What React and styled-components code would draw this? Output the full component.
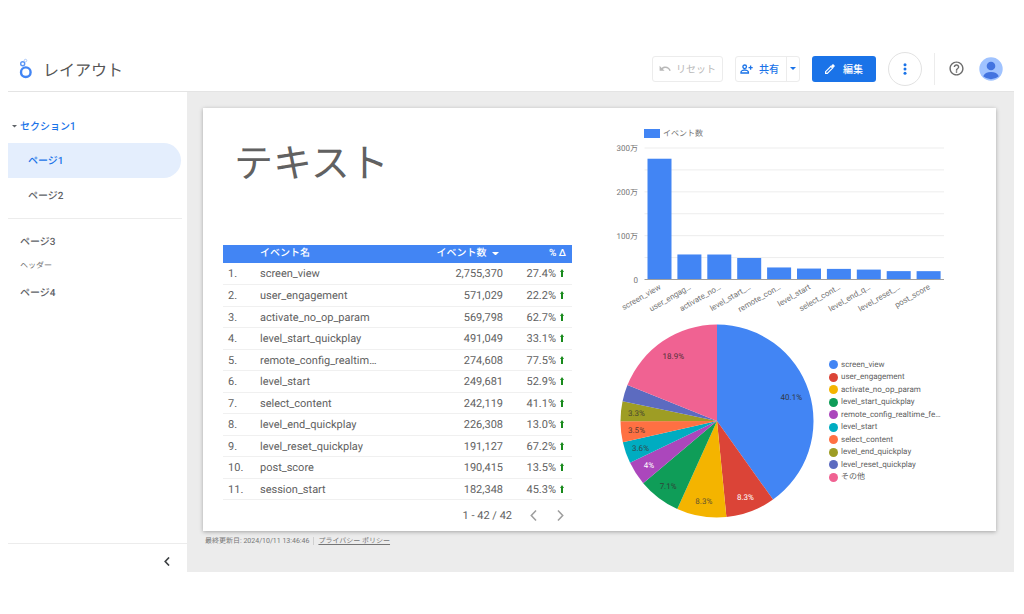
import React, { useState } from 'react';
import styled, { createGlobalStyle } from 'styled-components';

const GlobalStyle = createGlobalStyle`
    * {
        box-sizing: border-box;
    }

    body {
        margin: 0;
        background: #fff;
        color: #616161;
        font-family: Roboto, 'Noto Sans CJK JP', sans-serif;
        font-size: 10px;
        text-rendering: geometricPrecision;
    }

    button {
        font: inherit;
        color: inherit;
        padding: 0;
        border: 0;
        background: none;
        cursor: pointer;
    }

    svg {
        display: block;
        flex-shrink: 0;
    }
`;

const Page = styled.div`
    min-height: 100vh;
    display: flex;
    flex-direction: column;
    padding: 46px 10px 42px 8px;
`;

const Header = styled.header`
    display: flex;
    align-items: center;
    height: 46px;
    padding: 0 11px;
    border-bottom: 1px solid #e4e4e4;
`;

const Title = styled.h1`
    flex: 1;
    margin: 0 0 0 11px;
    padding-top: 5px;
    font-size: 16px;
    font-weight: 400;
    line-height: 20px;
    color: #555;
`;

const Actions = styled.div`
    display: flex;
    align-items: center;
    gap: 12px;
`;

const ActionButton = styled.button`
    display: flex;
    align-items: center;
    gap: ${(props) => props.$gap || 5}px;
    height: 26px;
    padding: 0 ${(props) => props.$pad || 6}px;
    border: ${(props) => (props.$primary ? '0' : '1px solid #ececec')};
    border-radius: 3px;
    background: ${(props) => (props.$primary ? '#1a73e8' : '#fff')};
    color: ${(props) => (props.$primary ? '#fff' : '#1a73e8')};
    font-weight: 500;

    &:disabled {
        color: #b8b8b8;
        font-weight: 400;
        cursor: default;
    }
`;

const SplitButton = styled.div`
    display: flex;
    height: 26px;
    border: 1px solid #ececec;
    border-radius: 3px;
    color: #1a73e8;
    font-weight: 500;
`;

const SplitMain = styled.button`
    display: flex;
    align-items: center;
    gap: 6px;
    padding: 0 7px 0 4px;
`;

const SplitToggle = styled.button`
    display: flex;
    align-items: center;
    justify-content: center;
    width: 13px;
    border-left: 1px solid #ececec;
`;

const MoreButton = styled.button`
    display: flex;
    align-items: center;
    justify-content: center;
    width: 34px;
    height: 34px;
    border: 1px solid #e2e2e2;
    border-radius: 50%;
    color: #1a73e8;
`;

const Account = styled.div`
    display: flex;
    align-items: center;
    gap: 14px;
    height: 32px;
    padding-left: 13px;
    border-left: 1px solid #ececec;
`;

const Body = styled.div`
    flex: 1;
    display: flex;
`;

const Sidebar = styled.aside`
    display: flex;
    flex-direction: column;
    width: 179px;
    flex-shrink: 0;
`;

const Nav = styled.nav`
    flex: 1;
    padding: 16px 5px 0 0;
`;

const SectionToggle = styled.button`
    display: flex;
    align-items: center;
    gap: 3px;
    width: 100%;
    height: 35px;
    padding-left: 4px;
    color: #1a73e8;
    font-weight: 500;

    svg {
        margin-top: 2px;
        color: #5f6368;
    }
`;

const NavGroup = styled.div`
    padding-top: ${(props) => (props.$divided ? '9px' : '0')};
    margin-top: ${(props) => (props.$divided ? '5px' : '0')};
    border-top: ${(props) => (props.$divided ? '1px solid #ececec' : '0')};
`;

const NavLink = styled.a`
    display: flex;
    align-items: center;
    height: ${(props) => (props.$nested ? '35px' : '26px')};
    margin-right: 1px;
    padding-bottom: 2px;
    padding-left: ${(props) => (props.$nested ? '20px' : '12px')};
    border-radius: 0 18px 18px 0;
    background: ${(props) => (props.$active ? '#e4eefd' : 'transparent')};
    color: ${(props) => (props.$active ? '#1a73e8' : '#5f6368')};
    font-weight: 500;
    text-decoration: none;
`;

const NavHeading = styled.div`
    display: flex;
    align-items: center;
    height: 25px;
    padding-bottom: 2px;
    padding-left: 12px;
    font-size: 8px;
    color: #757575;
`;

const SidebarFooter = styled.div`
    display: flex;
    align-items: center;
    justify-content: flex-end;
    height: 29px;
    padding: 7px 17px 0 0;
    border-top: 1px solid #ececec;
    color: #3c4043;
`;

const Canvas = styled.main`
    flex: 1;
    min-width: 0;
    padding: 16px 18px 0 16px;
    background: #ececec;
`;

const Report = styled.section`
    display: grid;
    grid-template-columns: 349fr 404fr;
    padding: 0 20px;
    background: #fff;
    box-shadow: 0 1px 4px rgba(0, 0, 0, 0.3);
`;

const ReportTitle = styled.h2`
    margin: 32px 0 57px 11px;
    font-size: 39px;
    font-weight: 400;
    line-height: 48px;
    color: #616161;
`;

const Table = styled.table`
    width: 100%;
    border-collapse: collapse;
    table-layout: fixed;
    font-size: 11px;
    line-height: 14px;
`;

const HeadCell = styled.th`
    width: ${(props) => props.$width || 'auto'};
    height: 18px;
    padding: 0 ${(props) => props.$end || 0}px 0 0;
    background: #4285f4;
    color: #fff;
    font-size: 10px;
    font-weight: 500;
    text-align: ${(props) => props.$align || 'left'};

    svg {
        display: inline-block;
        margin-left: 3px;
        vertical-align: middle;
    }
`;

const Row = styled.tr`
    height: 21px;
    border-bottom: 1px solid #f0f0f0;

    &:nth-child(even) {
        height: 22px;
    }
`;

const Cell = styled.td`
    padding: 2px 0 0;
    padding-left: ${(props) => props.$start || 0}px;
    padding-right: ${(props) => props.$end || 0}px;
    text-align: ${(props) => props.$align || 'left'};
    white-space: nowrap;

    svg {
        display: inline-block;
        margin-left: 4px;
    }
`;

const Pager = styled.div`
    display: flex;
    align-items: center;
    justify-content: flex-end;
    gap: 15px;
    height: 31px;
    padding-right: 6px;
    font-size: 11px;
`;

const PagerButton = styled.button`
    display: flex;
    justify-content: center;
    width: 12px;
    color: #9e9e9e;
`;

const Charts = styled.div`
    font-size: 8px;

    text {
        font-size: 8px;
    }
`;

const PieRow = styled.div`
    display: flex;
    align-items: center;
    gap: 12px;
    padding: 5px 0 0 45px;
`;

const Legend = styled.ul`
    display: grid;
    grid-auto-rows: 1fr;
    height: 125px;
    margin: 0;
    padding: 0;
    list-style: none;
    white-space: nowrap;
`;

const LegendItem = styled.li`
    display: flex;
    align-items: center;
    gap: 3px;
    line-height: 12px;

    &::before {
        content: '';
        width: 9px;
        height: 9px;
        border-radius: 50%;
        background: ${(props) => props.$color};
    }
`;

const Footer = styled.footer`
    display: flex;
    align-items: center;
    height: 20px;
    padding-left: 2px;
    font-size: 7px;
    line-height: 8px;
    color: #757575;
`;

const FooterLink = styled.a`
    margin-left: 4px;
    padding-left: 4px;
    border-left: 1px solid #d0d0d0;
    color: inherit;
`;

const events = [
    { name: 'screen_view', count: 2755370, change: '27.4%' },
    { name: 'user_engagement', count: 571029, change: '22.2%' },
    { name: 'activate_no_op_param', count: 569798, change: '62.7%' },
    { name: 'level_start_quickplay', count: 491049, change: '33.1%' },
    { name: 'remote_config_realtim…', count: 274608, change: '77.5%' },
    { name: 'level_start', count: 249681, change: '52.9%' },
    { name: 'select_content', count: 242119, change: '41.1%' },
    { name: 'level_end_quickplay', count: 226308, change: '13.0%' },
    { name: 'level_reset_quickplay', count: 191127, change: '67.2%' },
    { name: 'post_score', count: 190415, change: '13.5%' },
    { name: 'session_start', count: 182348, change: '45.3%' },
];

const barLabels = [
    'screen_view',
    'user_engag…',
    'activate_no…',
    'level_start_…',
    'remote_con…',
    'level_start',
    'select_cont…',
    'level_end_q…',
    'level_reset_…',
    'post_score',
];

const slices = [
    { name: 'screen_view', value: 40.1, color: '#4285f4', text: '#303a4a' },
    { name: 'user_engagement', value: 8.3, color: '#db4437', text: '#fff' },
    { name: 'activate_no_op_param', value: 8.3, color: '#f4b400', text: '#5f5330' },
    { name: 'level_start_quickplay', value: 7.1, color: '#0f9d58', text: '#304438' },
    { name: 'remote_config_realtime_fe…', value: 4, color: '#ab47bc', text: '#fff' },
    { name: 'level_start', value: 3.6, color: '#00acc1', text: '#304a4e' },
    { name: 'select_content', value: 3.5, color: '#ff7043', text: '#583a30' },
    { name: 'level_end_quickplay', value: 3.3, color: '#9e9d24', text: '#484830' },
    { name: 'level_reset_quickplay', value: 2.8, color: '#5c6bc0', hidden: true },
    { name: 'その他', value: 18.9, color: '#f06292', text: '#503038' },
];

function Logo() {
    return (
        <svg width="13" height="21" viewBox="0 0 13 21" fill="none">
            <circle cx="6.8" cy="14.2" r="4.8" stroke="#4285f4" strokeWidth="2.4" />
            <circle cx="3.7" cy="5.8" r="2" stroke="#5a95f5" strokeWidth="1.4" />
            <circle cx="6.5" cy="2.6" r="1.3" stroke="#a9c8fa" strokeWidth="1" />
        </svg>
    );
}

function Caret({ size = 6 }) {
    return (
        <svg width={size} height={size / 2} viewBox="0 0 6 3" fill="currentColor">
            <path d="M0 0h6L3 3z" />
        </svg>
    );
}

function Chevron({ left, width = 7, height = 11, stroke = 1.4 }) {
    return (
        <svg width={width} height={height} viewBox="0 0 6 10" fill="none" stroke="currentColor" strokeWidth={stroke}>
            <path d={left ? 'M5.3 .5 1 5l4.3 4.5' : 'M.7 .5 5 5 .7 9.5'} />
        </svg>
    );
}

function BarChart() {
    const base = 171.5;
    const unit = 131.5 / 3000000;
    const step = 29.9;

    return (
        <svg width="100%" viewBox="0 0 404 208" fill="#757575">
            <rect x="72" y="21" width="16" height="9" fill="#4285f4" />
            <text x="91" y="28">イベント数</text>
            {[1, 2, 3, 4, 5, 6].map((n) => (
                <path key={n} d={`M72.5 ${base - n * 500000 * unit}H372`} stroke="#ededed" />
            ))}
            {['0', '100万', '200万', '300万'].map((label, n) => (
                <text key={label} x="66" y={base + 3 - n * 1000000 * unit} textAnchor="end">{label}</text>
            ))}
            {barLabels.map((label, i) => {
                const height = events[i].count * unit;
                const center = 87.5 + i * step;
                return (
                    <g key={label}>
                        <rect x={center - 12} y={base - height} width="24" height={height} fill="#4285f4" />
                        <text transform={`translate(${center + 2} ${base + 9}) rotate(-30)`} textAnchor="end">{label}</text>
                    </g>
                );
            })}
            <path d={`M72.5 ${base}H372`} stroke="#9e9e9e" />
        </svg>
    );
}

function PieChart() {
    const total = slices.reduce((sum, slice) => sum + slice.value, 0);
    const point = (share, radius) => {
        const angle = (share / total) * Math.PI * 2;
        return [100 + radius * Math.sin(angle), 100 - radius * Math.cos(angle)];
    };
    let start = 0;

    return (
        <svg width="200" height="200" viewBox="0 0 200 200">
            {slices.map((slice) => {
                const from = point(start, 96.5);
                const to = point(start + slice.value, 96.5);
                const [x, y] = point(start + slice.value / 2, slice.value > 10 ? 78 : 81);
                start += slice.value;
                return (
                    <g key={slice.name}>
                        <path d={`M100 100L${from.join(' ')}A96.5 96.5 0 0 1 ${to.join(' ')}Z`} fill={slice.color} />
                        {!slice.hidden && (
                            <text x={x} y={y + 3} textAnchor="middle" fill={slice.text}>{slice.value}%</text>
                        )}
                    </g>
                );
            })}
        </svg>
    );
}

function TopBar() {
    return (
        <Header>
            <Logo />
            <Title>レイアウト</Title>
            <Actions>
                <ActionButton disabled>
                    <svg width="12" height="8" viewBox="0 0 12 8">
                        <path d="M.6 .8v5h5L3.800 4C4.500 3.400 5.400 3.100 6.400 3.100c1.900 0 3.500 1.200 4 2.900l1.400-.4C11.100 3.300 8.900 1.600 6.400 1.600 5 1.600 3.700 2.100 2.700 2.900z" fill="currentColor" />
                    </svg>
                    リセット
                </ActionButton>
                <SplitButton>
                    <SplitMain>
                        <svg width="13" height="10" viewBox="0 0 13 10" fill="none" stroke="currentColor" strokeWidth="1.300">
                            <circle cx="4.700" cy="2.800" r="1.800" />
                            <path d="M1 9V8c0-1.300 2.400-2 3.700-2s3.700.7 3.700 2v1zM10.600 1.500v4.200M8.500 3.600h4.200" />
                        </svg>
                        共有
                    </SplitMain>
                    <SplitToggle aria-label="共有オプション">
                        <Caret size={6} />
                    </SplitToggle>
                </SplitButton>
                <ActionButton $primary $gap={8} $pad={13}>
                    <svg width="10" height="10" viewBox="0 0 10 10" fill="none" stroke="currentColor" strokeWidth="1.200">
                        <path d="M.6 7.700V9.400h1.700L7.600 4.100 5.900 2.400z" />
                        <path d="M6.900 1.900 8 .8 9.200 2 8.100 3.100z" fill="currentColor" />
                    </svg>
                    編集
                </ActionButton>
                <MoreButton aria-label="その他のオプション">
                    <svg width="4" height="12" viewBox="0 0 4 12" fill="currentColor">
                        <circle cx="2" cy="1.700" r="1.500" />
                        <circle cx="2" cy="6" r="1.500" />
                        <circle cx="2" cy="10.300" r="1.500" />
                    </svg>
                </MoreButton>
                <Account>
                    <button aria-label="ヘルプ">
                        <svg width="17" height="17" viewBox="0 0 24 24" fill="#6b6b6b">
                            <path d="M11 18h2v-2h-2v2zm1-16C6.480 2 2 6.480 2 12s4.480 10 10 10 10-4.480 10-10S17.520 2 12 2zm0 18c-4.410 0-8-3.590-8-8s3.590-8 8-8 8 3.590 8 8-3.590 8-8 8zm0-14c-2.210 0-4 1.790-4 4h2c0-1.100.9-2 2-2s2 .9 2 2c0 2-3 1.750-3 5h2c0-2.250 3-2.500 3-5 0-2.210-1.790-4-4-4z" />
                        </svg>
                    </button>
                    <button aria-label="アカウント">
                        <svg width="24" height="24" viewBox="0 0 24 24">
                            <circle cx="12" cy="12" r="11.700" fill="#a0c3ff" />
                            <circle cx="12" cy="9" r="4.300" fill="#4374e0" />
                            <path d="M4.200 19.200c1-2.700 4-4.200 7.800-4.200s6.800 1.500 7.800 4.200a11.700 11.700 0 0 1-15.600 0z" fill="#4374e0" />
                        </svg>
                    </button>
                </Account>
            </Actions>
        </Header>
    );
}

function EventTable() {
    return (
        <Table>
            <thead>
                <tr>
                    <HeadCell $width="37px" />
                    <HeadCell>イベント名</HeadCell>
                    <HeadCell $width="100px" $align="right" $end={4}>イベント数 <Caret size={7} /></HeadCell>
                    <HeadCell $width="69px" $align="right" $end={6}>% Δ</HeadCell>
                </tr>
            </thead>
            <tbody>
                {events.map((event, index) => (
                    <Row key={event.name}>
                        <Cell $start={5}>{index + 1}.</Cell>
                        <Cell>{event.name}</Cell>
                        <Cell $align="right">{event.count.toLocaleString('en-US')}</Cell>
                        <Cell $align="right" $end={8}>
                            {event.change}
                            <svg width="4" height="8" viewBox="0 0 4 8" fill="#188a1c">
                                <path d="M2 0l2 3H3v5H1V3H0z" />
                            </svg>
                        </Cell>
                    </Row>
                ))}
            </tbody>
        </Table>
    );
}

function App() {
    const [open, setOpen] = useState(true);
    const [page, setPage] = useState(1);

    const renderLink = (n, nested) => (
        <NavLink href={`#page${n}`} $nested={nested} $active={page === n} onClick={() => setPage(n)}>
            ページ{n}
        </NavLink>
    );

    return (
        <Page>
            <GlobalStyle />
            <TopBar />
            <Body>
                <Sidebar>
                    <Nav>
                        <SectionToggle aria-expanded={open} onClick={() => setOpen(!open)}>
                            <Caret size={5} />
                            セクション1
                        </SectionToggle>
                        {open && (
                            <NavGroup>
                                {renderLink(1, true)}
                                {renderLink(2, true)}
                            </NavGroup>
                        )}
                        <NavGroup $divided>
                            {renderLink(3)}
                            <NavHeading>ヘッダー</NavHeading>
                            {renderLink(4)}
                        </NavGroup>
                    </Nav>
                    <SidebarFooter>
                        <button aria-label="折りたたむ">
                            <Chevron left width={6} height={9} stroke={1.8} />
                        </button>
                    </SidebarFooter>
                </Sidebar>
                <Canvas>
                    <Report>
                        <div>
                            <ReportTitle>テキスト</ReportTitle>
                            <EventTable />
                            <Pager>
                                <span>1 - 42 / 42</span>
                                <PagerButton aria-label="前へ"><Chevron left /></PagerButton>
                                <PagerButton aria-label="次へ"><Chevron /></PagerButton>
                            </Pager>
                        </div>
                        <Charts>
                            <BarChart />
                            <PieRow>
                                <PieChart />
                                <Legend>
                                    {slices.map((slice) => (
                                        <LegendItem key={slice.name} $color={slice.color}>{slice.name}</LegendItem>
                                    ))}
                                </Legend>
                            </PieRow>
                        </Charts>
                    </Report>
                    <Footer>
                        最終更新日: 2024/10/11 13:46:46
                        <FooterLink href="#privacy">プライバシー ポリシー</FooterLink>
                    </Footer>
                </Canvas>
            </Body>
        </Page>
    );
}

export default App;
